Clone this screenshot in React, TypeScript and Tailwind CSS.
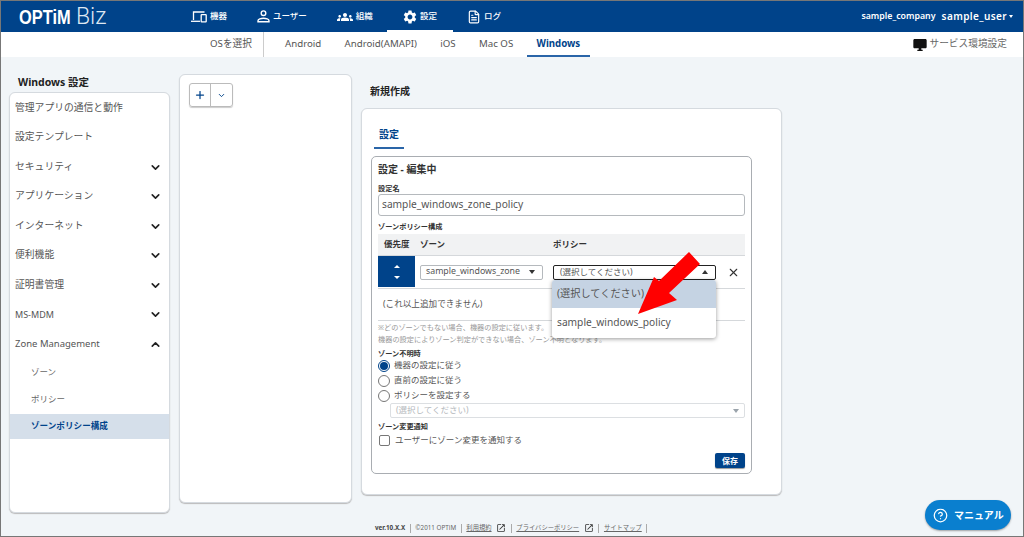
import { ChevronDown, ChevronUp, CircleHelp, FileText, Plus, X } from "lucide-react";
import { MdDesktopWindows, MdGroups, MdOpenInNew, MdSettings } from "react-icons/md";

const font = "font-['Noto_Sans','Noto_Sans_CJK_JP',sans-serif]";

const DevicesIcon = () => (
  <svg width="16" height="12" viewBox="0 0 16 12" fill="none" stroke="white" strokeWidth="1.3">
    <path d="M2.5 9V1h11" />
    <path d="M0 10.3h9" />
    <rect x="10.2" y="3.7" width="5" height="7.2" rx="0.5" />
  </svg>
);

const UserIcon = () => (
  <svg width="13" height="13" viewBox="0 0 13 13" fill="none" stroke="white" strokeWidth="1.4">
    <circle cx="6.5" cy="3.2" r="2.3" />
    <path d="M1 11.8h11v-1c0-1.6-3-2.6-5.500-2.600S1 9.200 1 10.800z" />
  </svg>
);

const navItems = [
  { label: "機器", icon: <DevicesIcon /> },
  { label: "ユーザー", icon: <UserIcon /> },
  { label: "組織", icon: <MdGroups className="w-[16px] h-[16px]" /> },
  { label: "設定", icon: <MdSettings className="w-[16px] h-[16px] -mx-[1px]" />, active: true },
  { label: "ログ", icon: <FileText className="w-[14px] h-[14px]" strokeWidth={2} /> },
];

const osTabs = ["Android", "Android(AMAPI)", "iOS", "Mac OS", "Windows"];

const sideItems = [
  { label: "管理アプリの通信と動作" },
  { label: "設定テンプレート" },
  { label: "セキュリティ", arrow: true },
  { label: "アプリケーション", arrow: true },
  { label: "インターネット", arrow: true },
  { label: "便利機能", arrow: true },
  { label: "証明書管理", arrow: true },
];

const Caret = ({ up, light }: { up?: boolean; light?: boolean }) => (
  <span
    className={`w-0 h-0 border-x-[3px] border-x-transparent ${
      up ? "border-b-[4px]" : "border-t-[4px]"
    } ${light ? "border-t-[#9aa3ab]" : "border-t-[#333] border-b-[#333]"}`}
  />
);

const Radio = ({ label, checked }: { label: string; checked?: boolean }) => (
  <div className="flex items-center h-[15px] gap-[4px]">
    <span
      className={`w-[12px] h-[12px] rounded-full border bg-white flex items-center justify-center ${
        checked ? "border-[#00438a]" : "border-[#777]"
      }`}
    >
      {checked && <span className="w-[8px] h-[8px] rounded-full bg-[#00438a]" />}
    </span>
    <span className="text-[8.500px] text-[#555]">{label}</span>
  </div>
);

export default function App() {
  return (
    <div className={`${font} relative h-[537px] w-full overflow-hidden border border-[#777] bg-[#f1f5f8] flex flex-col`}>
      {/* Header */}
      <header className="h-[31px] shrink-0 bg-[#00438a] text-white flex items-center">
        <div className="w-[174px] flex items-center pl-[18px] shrink-0">
          <span className="font-['Liberation_Sans'] font-bold text-[21px] leading-none scale-x-[0.78] origin-left w-[57px]">OPTiM</span>
          <span className="font-['Roboto'] font-light text-[23px] text-[#dfe8f2] leading-none">Biz</span>
        </div>
        <nav className="flex h-full">
          {navItems.map((item) => (
            <div key={item.label} className="relative flex items-center gap-[3px] px-[16px] -mr-[2px]">
              {item.icon}
              <span className="text-[8.500px] font-medium">{item.label}</span>
              {item.active && <span className="absolute left-0 right-0 bottom-0 h-[2px] bg-white" />}
            </div>
          ))}
        </nav>
        <div className="ml-auto flex items-center gap-[6px] pr-[10px] font-semibold">
          <span className="text-[8.800px]">sample_company</span>
          <span className="text-[10px] tracking-[0.4px]">sample_user</span>
          <span className="-ml-[4px]"><span className="block w-0 h-0 border-x-[2.500px] border-x-transparent border-t-[3px] border-t-white" /></span>
        </div>
      </header>

      {/* OS tabs */}
      <div className="h-[25px] shrink-0 bg-white flex items-center">
        <span className="ml-[209px] text-[9.700px] text-[#555] w-[53px]">OSを選択</span>
        <span className="w-[1px] h-full bg-[#ccc]" />
        <div className="flex h-full ml-[11px] gap-[3.300px]">
          {osTabs.map((t) => (
            <span
              key={t}
              className={`flex items-center px-[10px] text-[9.700px] ${
                t === "Windows"
                  ? "font-bold text-[#00438a] border-b-2 border-[#2a65a8] pt-[2px]"
                  : "text-[#555]"
              }`}
            >
              {t}
            </span>
          ))}
        </div>
        <div className="ml-auto flex items-center gap-[2px] pr-[16px] text-[9.700px] text-[#666]">
          <MdDesktopWindows className="w-[16px] h-[16px] text-[#111]" />
          サービス環境設定
        </div>
      </div>

      {/* Body */}
      <div className="flex-1 flex items-start">
        {/* Sidebar */}
        <div className="ml-[8px] w-[161px] shrink-0 mt-[17px]">
          <h2 className="pl-[9px] h-[18px] text-[10.500px] font-bold text-[#222] leading-[17px]">Windows 設定</h2>
          <div className="h-[421px] bg-white rounded-[6px] border border-[#d5dadf] shadow-[0_1px_1px_#bbb] overflow-hidden pt-[0.500px]">
            {sideItems.map((s) => (
              <div key={s.label} className="h-[29.500px] pl-[5px] pr-[7px] flex items-center justify-between text-[9.800px] text-[#555]">
                {s.label}
                {s.arrow && <ChevronDown className="w-[13px] h-[13px] text-[#222]" strokeWidth={3} />}
              </div>
            ))}
            <div className="h-[29.500px] pl-[5px] pr-[7px] flex items-center justify-between text-[9px] text-[#555]">
              MS-MDM
              <ChevronDown className="w-[13px] h-[13px] text-[#222]" strokeWidth={3} />
            </div>
            <div className="h-[29.500px] pl-[5px] pr-[7px] flex items-center justify-between text-[9.500px] text-[#555]">
              Zone Management
              <ChevronUp className="w-[13px] h-[13px] text-[#222]" strokeWidth={3} />
            </div>
            <div className="h-[27px] pl-[21px] flex items-center text-[8.500px] text-[#666]">ゾーン</div>
            <div className="h-[27.500px] pl-[21px] flex items-center text-[8.500px] text-[#666]">ポリシー</div>
            <div className="h-[25px] pl-[21px] flex items-center text-[8.600px] font-bold text-[#00438a] bg-[#d5dfea]">ゾーンポリシー構成</div>
          </div>
        </div>

        {/* Policy list */}
        <div className="ml-[9px] w-[173px] h-[429px] mt-[17px] shrink-0 bg-white rounded-[6px] border border-[#d5dadf] shadow-[0_1px_1px_#bbb] pt-[8px] pl-[9px]">
          <div className="flex w-fit h-[24px] rounded-[3px] border border-[#bbb] shadow-[0_1px_1px_#ccc]">
            <span className="w-[21px] flex items-center justify-center border-r border-[#bbb] text-[#00438a]">
              <Plus className="w-[12px] h-[12px]" strokeWidth={2.5} />
            </span>
            <span className="w-[21px] flex items-center justify-center text-[#00438a]">
              <ChevronDown className="w-[9px] h-[9px]" strokeWidth={2.5} />
            </span>
          </div>
        </div>

        {/* Editor */}
        <div className="ml-[9px] w-[421px] shrink-0">
          <h2 className="mt-[26px] h-[25px] pl-[9px] text-[10px] font-bold text-[#222] leading-[17px]">新規作成</h2>
          <div className="h-[387px] bg-white rounded-[6px] border border-[#d5dadf] shadow-[0_1px_1px_#bbb] pt-[16px] px-[9px]">
            <div className="flex w-fit h-[24px] px-[5px] pb-[4px] items-center text-[10px] font-bold text-[#00438a] border-b-2 border-[#2a65a8] ml-[3px]">設定</div>
            <div className="relative mt-[7px] w-[381px] h-[318px] rounded-[5px] border border-[#a9adb2] px-[6px] text-[#444]">
              <div className="h-[23px] pt-[3px] text-[10px] font-bold leading-[18px] text-[#333]">設定 - 編集中</div>
              <div className="h-[14px] text-[7.200px] font-bold leading-[17px] text-[#333]">設定名</div>
              <div className="h-[22px] rounded-[3px] border border-[#b5b9bd] flex items-center px-[3px] text-[10.200px] text-[#555]">sample_windows_zone_policy</div>
              <div className="mt-[5px] h-[13px] text-[7.200px] font-bold leading-[11px] text-[#333]">ゾーンポリシー構成</div>
              <div className="h-[21px] bg-[#f1f2f3] flex items-center text-[8.500px] font-bold text-[#333]">
                <span className="w-[42px] pl-[6px]">優先度</span>
                <span className="w-[133px]">ゾーン</span>
                <span>ポリシー</span>
              </div>
              <div className="h-[34px] border-t border-b border-[#d5d8db] flex items-center relative">
                <div className="w-[37px] h-[31px] self-start bg-[#00438a] flex flex-col items-center justify-center gap-[8px]">
                  <span className="block w-0 h-0 border-x-[3px] border-x-transparent border-b-[3px] border-b-white" />
                  <span className="block w-0 h-0 border-x-[3px] border-x-transparent border-t-[3px] border-t-white" />
                </div>
                <div className="ml-[5px] w-[123px] h-[15px] rounded-[2px] border border-[#b5b9bd] flex items-center justify-between pl-[5px] pr-[7px] text-[8.800px] text-[#555]">
                  sample_windows_zone
                  <Caret />
                </div>
                <div className="ml-[10px] w-[163px] h-[15px] rounded-[2px] border border-[#222] flex items-center justify-between pl-[6px] pr-[7px] text-[8.500px] text-[#555]">
                  (選択してください)
                  <Caret up />
                </div>
                <X className="ml-[11px] w-[13px] h-[13px] text-[#333]" strokeWidth={2} />
              </div>
              <div className="h-[32px] border-b border-[#d5d8db] flex items-center pl-[5px] text-[8.600px] text-[#555]">(これ以上追加できません)</div>
              <div className="h-[26px] text-[7.200px] leading-[12px] text-[#999]">
                <div>※どのゾーンでもない場合、機器の設定に従います。</div>
                <div>機器の設定によりゾーン判定ができない場合、ゾーン不明となります。</div>
              </div>
              <div className="mt-[1px] h-[10px] text-[7.200px] font-bold leading-[11px] text-[#333]">ゾーン不明時</div>
              <Radio label="機器の設定に従う" checked />
              <Radio label="直前の設定に従う" />
              <Radio label="ポリシーを設定する" />
              <div className="ml-[12px] h-[15px] rounded-[2px] border border-[#dcdfe2] flex items-center justify-between pl-[5px] pr-[5px] text-[8.500px] text-[#b4b8bc]">
                (選択してください)
                <Caret light />
              </div>
              <div className="mt-[2px] h-[14px] text-[7.200px] font-bold leading-[13px] text-[#333]">ゾーン変更通知</div>
              <div className="flex items-center h-[13px] gap-[5px] pl-[1px]">
                <span className="w-[11px] h-[11px] rounded-[2px] border border-[#777] bg-white" />
                <span className="text-[8.500px] text-[#555]">ユーザーにゾーン変更を通知する</span>
              </div>
              <div className="flex justify-end mt-[6px]">
                <span className="w-[30px] h-[15px] rounded-[2px] bg-[#00438a] shadow-[0_1px_1px_#999] text-white text-[8px] font-bold flex items-center justify-center">保存</span>
              </div>

              {/* Open dropdown */}
              <div className="absolute left-[180px] top-[123px] w-[164px] h-[58px] bg-white rounded-[3px] shadow-[0_1px_4px_rgba(0,0,0,0.4)] overflow-hidden text-[10.200px] text-[#555]">
                <div className="h-[28px] bg-[#c5d3e3] flex items-center pl-[5px]">(選択してください)</div>
                <div className="h-[30px] flex items-center pl-[5px]">sample_windows_policy</div>
              </div>
            </div>
          </div>
        </div>
      </div>

      {/* Footer */}
      <footer className="h-[19px] pt-[3px] shrink-0 flex items-center pl-[374px] text-[6.300px] text-[#666] gap-[4.600px]">
        <span className="font-bold text-[#444]">ver.10.X.X</span>
        <span className="w-px h-[9px] bg-[#aaa]" />
        <span>©2011 OPTiM</span>
        <span className="w-px h-[9px] bg-[#aaa]" />
        <span className="underline">利用規約</span>
        <MdOpenInNew className="w-[10px] h-[10px] text-[#333]" />
        <span className="w-px h-[9px] bg-[#aaa]" />
        <span className="underline">プライバシーポリシー</span>
        <MdOpenInNew className="w-[10px] h-[10px] text-[#333]" />
        <span className="w-px h-[9px] bg-[#aaa]" />
        <span className="underline">サイトマップ</span>
        <span className="w-px h-[9px] bg-[#aaa]" />
      </footer>

      {/* Manual button */}
      <div className="absolute left-[924px] top-[499px] w-[86px] h-[30px] rounded-full bg-[#0a7fcf] shadow-[0_1px_2px_rgba(0,0,0,0.35)] text-white flex items-center pl-[8px] gap-[6px] text-[10px] font-bold">
        <CircleHelp className="w-[15px] h-[15px]" strokeWidth={2} />
        マニュアル
      </div>

      {/* Red arrow annotation */}
      <svg className="absolute left-0 top-0 pointer-events-none" width="1024" height="537" viewBox="0 0 1024 537">
        <polygon points="637,313 653,276 658,280 688,251 699,263 668,292 676,299" fill="#ff0000" />
      </svg>
    </div>
  );
}
